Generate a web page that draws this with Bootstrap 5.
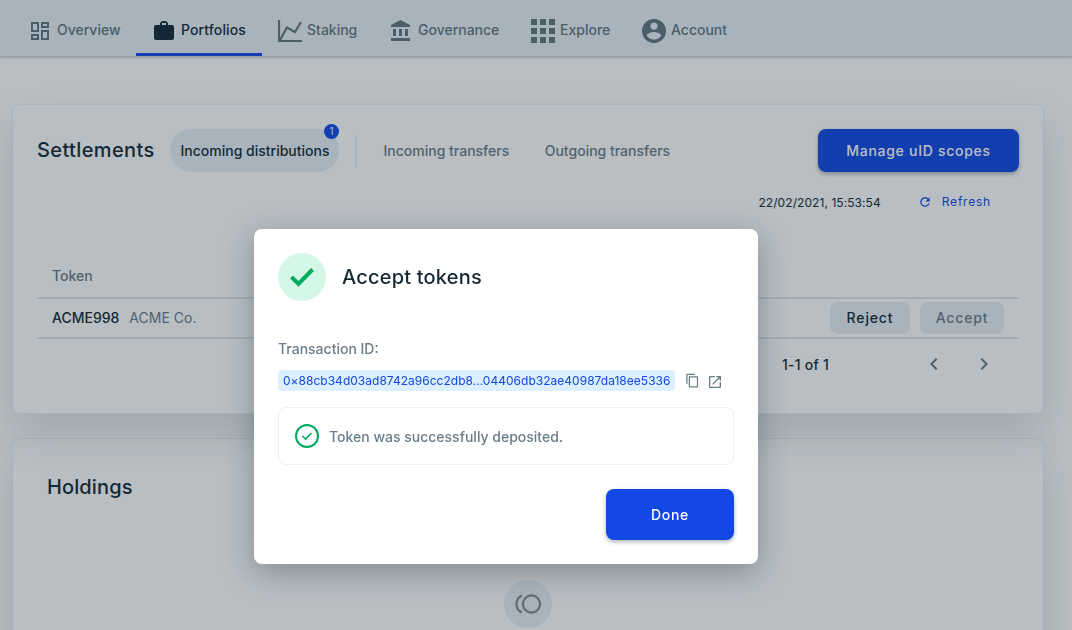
<!DOCTYPE html>
<html lang="en">
<head>
<meta charset="utf-8">
<meta name="viewport" content="width=device-width, initial-scale=1">
<title>Portfolios</title>
<link href="https://cdn.jsdelivr.net/npm/bootstrap@5.3.0/dist/css/bootstrap.min.css" rel="stylesheet">
<style>
:root{--ink:#152935;--muted:#6b7c89;--brand:#1348e4;--mist:#eaf0f7}
html,body{height:100%;overflow:hidden}
body{font-family:Inter,"Liberation Sans",sans-serif;font-size:14px;font-weight:500;line-height:20px;color:var(--ink);background:#fff}
svg{display:block;flex:none;fill:currentColor}
.page{height:100vh;overflow:hidden}
.topnav{height:57px;background:var(--mist);border-bottom:1px solid #ccd5db;box-shadow:0 1px 2px rgba(21,41,53,.2);padding:0 12px;flex-wrap:nowrap}
.topnav .nav-link{height:56px;padding:8px 0 0 16px;gap:5px;color:#627682;border-bottom:3px solid transparent;width:111px}
.topnav .nav-link:nth-child(1){width:124px}
.topnav .nav-link:nth-child(2){width:126px;letter-spacing:.1px}
.topnav .nav-link:nth-child(4){width:142px}
.topnav .nav-link.active{color:var(--ink);border-color:var(--brand)}
.topnav .nav-link span{padding-bottom:2px}
.panel{width:1032px;margin-left:12px;border:1px solid var(--mist);border-radius:8px;box-shadow:0 20px 40px rgba(21,41,53,.14);--bs-card-bg:#fff}
.settle{margin-top:47px;height:310px;padding:24px;z-index:1}
.holdings{margin-top:24px;height:240px;padding:34px 34px}
.ttl{font-size:20px;line-height:28px;font-weight:500;letter-spacing:.2px;margin:0}
.holdings .ttl{letter-spacing:.12px}
.settle-title{letter-spacing:.37px;width:117px;padding-bottom:2px;white-space:nowrap}
.pill-tab{height:43px;border-radius:22px;background:var(--mist);padding:0 10.500px;width:169px;white-space:nowrap}
.count{width:15px;height:15px;border-radius:50%;background:var(--brand);color:#fff;font-size:10px;line-height:15px;top:-5px;right:0;font-weight:400}
.rule{width:2px;height:32px;background:var(--mist);margin:0 26.500px 0 16px}
.outgoing{margin-left:35.500px}
.muted{color:var(--muted)}
.btn{--bs-btn-font-size:14px;--bs-btn-font-weight:500;--bs-btn-line-height:20px;--bs-btn-border-radius:8px;--bs-btn-padding-x:0;--bs-btn-padding-y:0;letter-spacing:.72px;border:0}
.btn-primary{--bs-btn-bg:var(--brand);box-shadow:0 2px 4px rgba(21,41,53,.35)}
.manage{width:201px;height:43px}
.soft{height:32px;--bs-btn-bg:var(--mist);--bs-btn-color:var(--ink);letter-spacing:.85px}
.reject{width:80px}
.accept{width:84px;color:var(--muted)}
.stamp{height:20px;margin-top:20px;padding-right:28px;font-size:12px;letter-spacing:.07px;font-weight:400}
.stamp-time{padding-top:2px}
.refresh{color:var(--brand);margin-left:37px;gap:10px;letter-spacing:.78px}
.grid-table{margin:44px 0 0;--bs-table-bg:transparent;border-color:var(--mist);color:var(--ink)}
.grid-table th,.grid-table td{border-bottom:2px solid #e1e9f1;padding:0 15px;height:40px;vertical-align:middle;font-weight:500}
.grid-table thead th{height:42px;color:var(--muted);padding-bottom:2px}
.company{margin-left:10px;font-weight:400}
.actions{gap:10px}
.pager{height:50px;padding-right:24px}
.range{margin-right:93px;letter-spacing:.22px;padding-top:1px}
.next{margin-left:25.500px;margin-right:-.5px}
.coin{width:48px;height:48px;margin-top:79px;border-radius:50%;background:var(--mist);color:#7c8c99}
.modal-backdrop{--bs-backdrop-bg:#152935;--bs-backdrop-opacity:.3}
.modal-dialog{width:504px;max-width:504px;margin:229px 0 0 254px}
.modal-content{height:335px;border:0;border-radius:8px;padding:24px;box-shadow:0 8px 30px rgba(21,41,53,.34);color:var(--ink)}
.okay{width:48px;height:48px;border-radius:50%;background:#d4f7e7;color:#00aa5e}
.tx-label{margin-top:38px}
.tx-row{margin-top:11px;height:21px}
.txid{height:21px;width:397px;border-radius:4px;background:#dcefff;color:var(--brand);font-size:12px;line-height:21px;padding-left:5px;font-weight:400;white-space:nowrap;letter-spacing:.02px}
.copy{margin-left:10px}
.launch{margin:2px 0 0 7px}
.notice{margin-top:16px;height:58px;border:1px solid #ebf0f7;border-radius:8px;padding:0 16px;gap:10px}
.notice span{padding-top:2px}
.done{margin-top:24px;width:128px;height:51px}
</style>
</head>
<body>
<div class="page">
<nav class="nav topnav">
  <a class="nav-link d-flex align-items-center" href="#"><svg width="24" height="24" viewBox="0 0 24 24"><path d="M19 5v2h-4V5h4M9 5v6H5V5h4m10 8v6h-4v-6h4M9 17v2H5v-2h4M21 3h-8v6h8V3zM11 3H3v10h8V3zm10 8h-8v10h8V11zm-10 4H3v6h8v-6z"/></svg><span>Overview</span></a>
  <a class="nav-link active d-flex align-items-center" href="#"><svg width="24" height="24" viewBox="0 0 24 24"><path d="M20 6h-4V4l-2-2h-4L8 4v2H4c-1.100 0-2 .9-2 2v11c0 1.100.9 2 2 2h16c1.100 0 2-.9 2-2V8c0-1.100-.9-2-2-2zm-6 0h-4V4h4v2z"/></svg><span>Portfolios</span></a>
  <a class="nav-link d-flex align-items-center" href="#"><svg width="24" height="24" viewBox="0 0 24 24"><path fill="none" stroke="currentColor" stroke-width="2.200" d="M1 1v21h23M2 21 9 8.500l8 4.500 6-10"/></svg><span>Staking</span></a>
  <a class="nav-link d-flex align-items-center" href="#"><svg width="24" height="24" viewBox="0 0 24 24"><path d="M4 10h3v7H4zM10 10h3v7h-3zM16 10h3v7h-3zM2 19h19v3H2zM11.500 1 2 6v2h19V6z"/></svg><span>Governance</span></a>
  <a class="nav-link d-flex align-items-center" href="#"><svg width="24" height="24" viewBox="0 0 24 24"><path d="M0 0h6v6H0zM9 0h6v6H9zM18 0h6v6h-6zM0 9h6v6H0zM9 9h6v6H9zM18 9h6v6h-6zM0 18h6v6H0zM9 18h6v6H9zM18 18h6v6h-6z"/></svg><span>Explore</span></a>
  <a class="nav-link d-flex align-items-center" href="#"><svg width="24" height="24" viewBox="2 2 20 20"><path d="M12 2C6.480 2 2 6.480 2 12s4.480 10 10 10 10-4.480 10-10S17.520 2 12 2zm0 3c1.660 0 3 1.340 3 3s-1.340 3-3 3-3-1.340-3-3 1.340-3 3-3zm0 14.200c-2.500 0-4.710-1.280-6-3.220.03-1.990 4-3.080 6-3.080 1.990 0 5.970 1.090 6 3.080-1.290 1.940-3.500 3.220-6 3.220z"/></svg><span>Account</span></a>
</nav>

<section class="card panel settle">
  <div class="d-flex align-items-center">
    <h1 class="ttl settle-title">Settlements</h1>
    <div class="pill-tab position-relative d-flex align-items-center ms-3">Incoming distributions<span class="count position-absolute text-center">1</span></div>
    <div class="rule"></div>
    <span class="muted">Incoming transfers</span>
    <span class="muted outgoing">Outgoing transfers</span>
    <button class="btn btn-primary manage ms-auto">Manage uID scopes</button>
  </div>
  <div class="stamp d-flex justify-content-end align-items-center">
    <span class="stamp-time">22/02/2021, 15:53:54</span>
    <a href="#" class="refresh d-flex align-items-center text-decoration-none"><svg width="14" height="14" viewBox="0 0 24 24"><path d="M17.650 6.350C16.200 4.900 14.210 4 12 4c-4.420 0-7.990 3.580-7.990 8s3.570 8 7.990 8c3.730 0 6.840-2.550 7.730-6h-2.080c-.82 2.330-3.040 4-5.650 4-3.310 0-6-2.690-6-6s2.690-6 6-6c1.660 0 3.140.69 4.220 1.780L13 11h7V4l-2.350 2.350z"/></svg><span>Refresh</span></a>
  </div>
  <table class="table grid-table">
    <thead><tr><th>Token</th><th></th></tr></thead>
    <tbody><tr>
      <td>ACME998<span class="company muted">ACME Co.</span></td>
      <td><div class="d-flex justify-content-end actions"><button class="btn soft reject">Reject</button><button class="btn soft accept">Accept</button></div></td>
    </tr></tbody>
  </table>
  <div class="pager d-flex justify-content-end align-items-center">
    <span class="range">1-1 of 1</span>
    <svg class="muted" width="24" height="24" viewBox="0 0 24 24"><path d="M15.410 7.410 14 6l-6 6 6 6 1.410-1.410L10.830 12z"/></svg>
    <svg class="muted next" width="24" height="24" viewBox="0 0 24 24"><path d="M10 6 8.590 7.410 13.170 12l-4.580 4.590L10 18l6-6z"/></svg>
  </div>
</section>

<section class="card panel holdings">
  <h2 class="ttl">Holdings</h2>
  <div class="coin d-flex align-items-center justify-content-center mx-auto"><svg width="28" height="22" viewBox="0 0 28 22"><g fill="none" stroke="currentColor" stroke-width="2.200"><circle cx="17.500" cy="11" r="8.600"/><path d="M8 2.500a9.300 9.300 0 0 0 0 17"/></g></svg></div>
</section>
</div>

<div class="modal-backdrop show"></div>
<div class="modal d-block overflow-hidden" tabindex="-1" role="dialog">
  <div class="modal-dialog">
    <div class="modal-content">
      <div class="d-flex align-items-center gap-3">
        <div class="okay d-flex align-items-center justify-content-center"><svg width="24" height="20" viewBox="0 0 24 20"><path fill="none" stroke="currentColor" stroke-width="4" d="m1.500 10 7 7L22.500 2.500"/></svg></div>
        <h2 class="ttl">Accept tokens</h2>
      </div>
      <div class="muted tx-label">Transaction ID:</div>
      <div class="d-flex align-items-center tx-row">
        <div class="txid">0×88cb34d03ad8742a96cc2db8...04406db32ae40987da18ee5336</div>
        <svg class="muted copy" width="15" height="15" viewBox="1 0 22 24"><path d="M16 1H4c-1.100 0-2 .9-2 2v14h2V3h12V1zm3 4H8c-1.100 0-2 .9-2 2v14c0 1.100.9 2 2 2h11c1.100 0 2-.9 2-2V7c0-1.100-.9-2-2-2zm0 16H8V7h11v14z"/></svg>
        <svg class="muted launch" width="16" height="16" viewBox="0 0 24 24"><path d="M19 19H5V5h7V3H5c-1.110 0-2 .9-2 2v14c0 1.100.89 2 2 2h14c1.100 0 2-.9 2-2v-7h-2v7zM14 3v2h3.590l-9.830 9.830 1.410 1.410L19 6.410V10h2V3h-7z"/></svg>
      </div>
      <div class="notice d-flex align-items-center">
        <svg width="24" height="24" viewBox="0 0 24 24" color="#00aa5e"><g fill="none" stroke="currentColor" stroke-width="2"><circle cx="12" cy="12" r="11"/><path stroke-width="1.600" d="m7.500 12 3 3 6-6"/></g></svg>
        <span class="muted">Token was successfully deposited.</span>
      </div>
      <button class="btn btn-primary done ms-auto">Done</button>
    </div>
  </div>
</div>
<script src="https://cdn.jsdelivr.net/npm/bootstrap@5.3.0/dist/js/bootstrap.bundle.min.js"></script>
</body>
</html>
